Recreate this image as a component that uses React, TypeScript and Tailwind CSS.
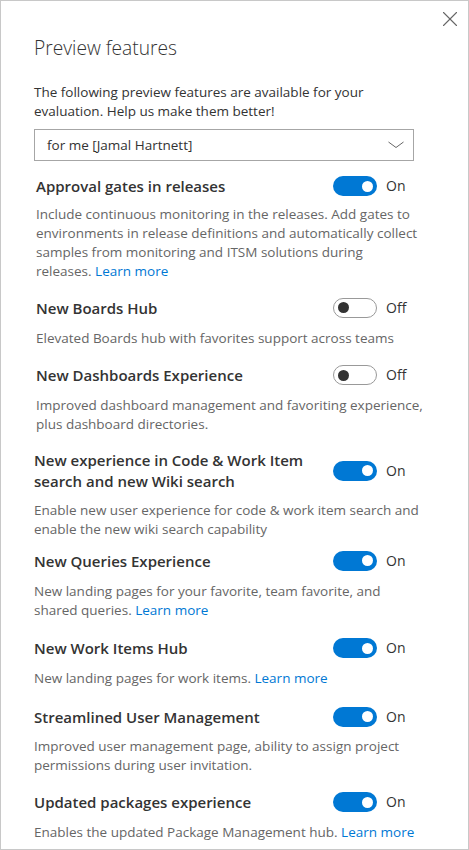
import { X } from 'lucide-react'

type Feature = {
  title: string[]
  desc: string[]
  link?: boolean
  on: boolean
  shift?: boolean
  top: string
  descTop: string
}

const features: Feature[] = [
  {
    title: ['Approval gates in releases'],
    desc: [
      'Include continuous monitoring in the releases. Add gates to',
      'environments in release definitions and automatically collect',
      'samples from monitoring and ITSM solutions during',
      'releases.',
    ],
    link: true,
    on: true,
    shift: true,
    top: 'mt-[15px]',
    descTop: 'mt-[8.5px]',
  },
  {
    title: ['New Boards Hub'],
    desc: ['Elevated Boards hub with favorites support across teams'],
    on: false,
    shift: true,
    top: 'mt-[16.5px]',
    descTop: 'mt-[10.5px]',
  },
  {
    title: ['New Dashboards Experience'],
    desc: ['Improved dashboard management and favoriting experience,', 'plus dashboard directories.'],
    on: false,
    shift: true,
    top: 'mt-[17.5px]',
    descTop: 'mt-[10.5px]',
  },
  {
    title: ['New experience in Code & Work Item', 'search and new Wiki search'],
    desc: ['Enable new user experience for code & work item search and', 'enable the new wiki search capability'],
    on: true,
    top: 'mt-[16px]',
    descTop: 'mt-[10px]',
  },
  {
    title: ['New Queries Experience'],
    desc: ['New landing pages for your favorite, team favorite, and', 'shared queries.'],
    link: true,
    on: true,
    top: 'mt-[11.5px]',
    descTop: 'mt-[10.5px]',
  },
  {
    title: ['New Work Items Hub'],
    desc: ['New landing pages for work items.'],
    link: true,
    on: true,
    top: 'mt-[18.5px]',
    descTop: 'mt-[10.5px]',
  },
  {
    title: ['Streamlined User Management'],
    desc: ['Improved user management page, ability to assign project', 'permissions during user invitation.'],
    on: true,
    top: 'mt-[18.5px]',
    descTop: 'mt-[9.5px]',
  },
  {
    title: ['Updated packages experience'],
    desc: ['Enables the updated Package Management hub.'],
    link: true,
    on: true,
    top: 'mt-[17.5px]',
    descTop: 'mt-[10.5px]',
  },
]

function Toggle({ on }: { on: boolean }) {
  return (
    <div className="flex items-center gap-[9px] shrink-0">
      {on ? (
        <div className="w-[44px] h-[20px] rounded-full bg-[#0078d4] flex items-center justify-end pr-[4px]">
          <div className="w-[11px] h-[11px] rounded-full bg-white" />
        </div>
      ) : (
        <div className="w-[44px] h-[20px] rounded-full border border-[#999999] bg-white flex items-center pl-[4px]">
          <div className="w-[11px] h-[11px] rounded-full bg-[#333333]" />
        </div>
      )}
      <span className="text-[14px] leading-[20px] text-[#333333] w-[27px]">{on ? 'On' : 'Off'}</span>
    </div>
  )
}

function FeatureRow({ f }: { f: Feature }) {
  return (
    <div className={`${f.top} ${f.shift ? 'pl-[2px]' : 'pl-0'}`}>
      <div className="flex items-center justify-between">
        <div className="text-[15px] leading-[20.5px] font-semibold text-[#333333]">
          {f.title.map((t) => (
            <div key={t} className="whitespace-nowrap">
              {t}
            </div>
          ))}
        </div>
        <Toggle on={f.on} />
      </div>
      <div className={`${f.descTop} text-[13.5px] leading-[19px] text-[#666666]`}>
        {f.desc.map((line, i) => (
          <div key={line} className="whitespace-nowrap">
            {line}
            {f.link && i === f.desc.length - 1 && (
              <>
                {' '}
                <a className="text-[#0078d4]">Learn more</a>
              </>
            )}
          </div>
        ))}
      </div>
    </div>
  )
}

export default function App() {
  return (
    <div
      className="relative w-[469px] h-[850px] overflow-hidden bg-white border border-[#c8c8c8]"
      style={{ fontFamily: '"Open Sans", "Noto Sans", sans-serif' }}
    >
      {/* Close */}
      <button className="absolute top-[5px] right-[5px] text-[#666666]" aria-label="Close">
        <X className="w-[26px] h-[26px]" strokeWidth={1} />
      </button>

      <div className="pl-[33px] pr-[55px] pt-[33px]">
        <h1 className="text-[19.2px] leading-[28px] font-light text-[#333333]">Preview features</h1>

        <p className="mt-[20.5px] text-[13.5px] leading-[19px] text-[#333333]">
          The following preview features are available for your
          <br />
          evaluation. Help us make them better!
        </p>

        <div className="mt-[8.5px] h-[32px] w-[380px] border border-[#a6a6a6] flex items-center justify-between pl-[12px] pr-[9px]">
          <span className="text-[13.5px] text-[#333333]">for me [Jamal Hartnett]</span>
          <svg width="16" height="8" viewBox="0 0 16 8" fill="none" className="mb-[1px]">
            <polyline points="0.5,1 8,6.5 15.5,1" stroke="#666666" strokeWidth="1" />
          </svg>
        </div>

        <div className="flex flex-col">
          {features.map((f) => (
            <FeatureRow key={f.title[0]} f={f} />
          ))}
        </div>
      </div>
    </div>
  )
}
